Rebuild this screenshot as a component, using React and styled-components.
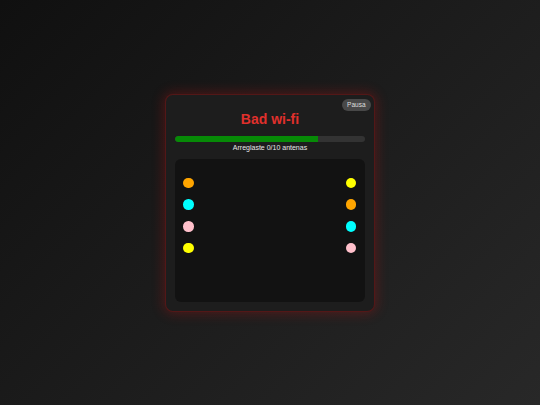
import React from "react";
import styled, { createGlobalStyle } from "styled-components";

const Global = createGlobalStyle`
  html, body { margin: 0; padding: 0; }
  body {
    font-family: "Liberation Sans", Arial, sans-serif;
    background: linear-gradient(135deg, #101010 0%, #1c1c1c 50%, #282828 100%);
    min-height: 100vh;
  }
`;

const Page = styled.div`
  width: 100vw;
  height: 100vh;
  display: flex;
  align-items: center;
  justify-content: center;
`;

const Card = styled.div`
  width: 210px;
  box-sizing: border-box;
  padding: 4px 9px 9px;
  background: #1d1d1d;
  border-radius: 8px;
  border: 1px solid rgba(120, 20, 20, 0.6);
  box-shadow: 0 0 12px 2px rgba(190, 20, 20, 0.3);
  display: flex;
  flex-direction: column;
`;

const Header = styled.div`
  display: flex;
  justify-content: flex-end;
  margin-right: -6px;
`;

const PauseButton = styled.button`
  height: 12px;
  padding: 0 5.5px;
  border: none;
  border-radius: 6px;
  background: #484848;
  color: #dedede;
  font-family: "Liberation Sans", Arial, sans-serif;
  font-size: 6.5px;
  line-height: 12px;
`;

const Title = styled.h1`
  margin: 0;
  text-align: center;
  color: #e0302c;
  font-size: 14px;
  line-height: 16px;
  font-weight: 700;
`;

const Track = styled.div`
  margin-top: 9px;
  height: 6px;
  border-radius: 3px;
  background: #333333;
  overflow: hidden;
`;

const Fill = styled.div`
  height: 100%;
  background: #078a07;
  border-radius: 3px 0 0 3px;
`;

const Status = styled.div`
  margin-top: 2px;
  text-align: center;
  color: #e8e8e8;
  font-size: 7px;
  line-height: 8px;
`;

const Board = styled.div`
  margin-top: 7px;
  height: 143px;
  box-sizing: border-box;
  padding: 19px 9px 0 8px;
  background: #121212;
  border-radius: 6px;
  display: flex;
  justify-content: space-between;
  align-items: flex-start;
`;

const Column = styled.div`
  display: flex;
  flex-direction: column;
  gap: 11.3px;
`;

const Dot = styled.div`
  width: 10.5px;
  height: 10.5px;
  border-radius: 50%;
  background: ${(p) => p.$color};
`;

const left = ["#ffa500", "#00ffff", "#ffc0cb", "#ffff00"];
const right = ["#ffff00", "#ffa500", "#00ffff", "#ffc0cb"];

export default function App() {
  const progress = 75;
  return (
    <>
      <Global />
      <Page>
        <Card>
          <Header>
            <PauseButton>Pausa</PauseButton>
          </Header>
          <Title>Bad wi-fi</Title>
          <Track>
            <Fill style={{ width: `${progress}%` }} />
          </Track>
          <Status>Arreglaste 0/10 antenas</Status>
          <Board>
            <Column>
              {left.map((c, i) => (
                <Dot key={i} $color={c} />
              ))}
            </Column>
            <Column>
              {right.map((c, i) => (
                <Dot key={i} $color={c} />
              ))}
            </Column>
          </Board>
        </Card>
      </Page>
    </>
  );
}
